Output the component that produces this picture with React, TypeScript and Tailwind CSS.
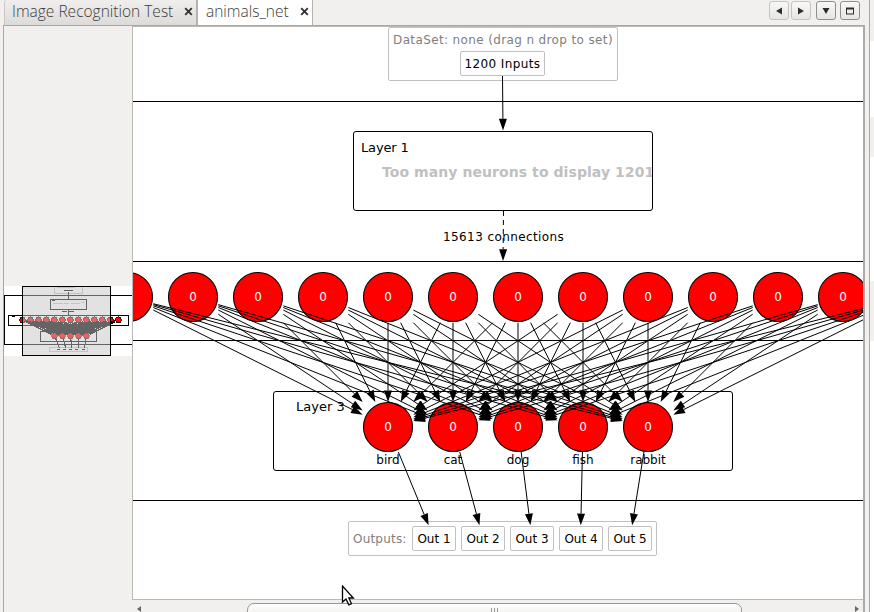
import React from "react";

const LAYER2_X = [128, 193, 258, 323, 388, 453, 518, 583, 648, 713, 778, 843, 908];
const LAYER2_Y = 297;
const LAYER3 = [
  { x: 388, label: "bird", out: 434 },
  { x: 453, label: "cat", out: 483 },
  { x: 518, label: "dog", out: 532 },
  { x: 583, label: "fish", out: 580.5 },
  { x: 648, label: "rabbit", out: 630 },
];
const LAYER3_Y = 427;

type Line = [number, number, number, number];

// Connections run centre to centre and are clipped to each neuron's bounding square.
const connections: Line[] = LAYER2_X.flatMap((sx) =>
  LAYER3.map(({ x }): Line => {
    const dx = x - sx;
    const dy = LAYER3_Y - LAYER2_Y;
    const k = 25.3 / Math.max(Math.abs(dx), dy);
    return [sx + dx * k, LAYER2_Y + 0.4 + dy * k, x - dx * k, LAYER3_Y + 0.4 - dy * k];
  })
);

const outputs: Line[] = LAYER3.map(({ x, out }): Line => {
  const dx = out - x;
  const dy = 538 - LAYER3_Y;
  return [x + (dx * 25) / dy, LAYER3_Y + 25, out - (dx * 13) / dy, 525.3];
});

function Arrow({ line, dashed }: { line: Line; dashed?: boolean }) {
  const [x1, y1, x2, y2] = line;
  const len = Math.hypot(x2 - x1, y2 - y1);
  const ux = (x2 - x1) / len;
  const uy = (y2 - y1) / len;
  const bx = x2 - ux * 11.7;
  const by = y2 - uy * 11.7;
  const w = 4;
  return (
    <g>
      <line x1={x1} y1={y1} x2={bx} y2={by} stroke="black" strokeDasharray={dashed ? "5 4" : undefined} />
      <polygon points={`${x2},${y2} ${bx - uy * w},${by + ux * w} ${bx + uy * w},${by - ux * w}`} />
    </g>
  );
}

function Neuron({ x, y }: { x: number; y: number }) {
  return <circle cx={x} cy={y} r={24.5} fill="#ff0000" stroke="black" strokeWidth={1.1} />;
}

function Label({ x, y, w, className = "", children }: { x: number; y: number; w?: number; className?: string; children: React.ReactNode }) {
  return (
    <span className={`absolute whitespace-nowrap leading-4 ${className}`} style={{ left: x - 133, top: y - 27, width: w }}>
      {children}
    </span>
  );
}

function Canvas() {
  return (
    <div className="relative h-[572px] w-[730px] overflow-hidden bg-white text-[12px] text-black">
      <div className="absolute top-[74px] -left-5 h-[400px] w-[800px] border border-black" />
      <div className="absolute top-[234px] -left-5 h-[80px] w-[800px] border border-black" />
      <div className="absolute top-0 left-[255px] flex h-[54px] w-[230px] flex-col items-center rounded-[2px] border border-[#c0c0c0] pt-[3px]">
        <span className="text-[12px] leading-[18px] tracking-[0.37px] whitespace-nowrap text-[#808080]">DataSet: none (drag n drop to set)</span>
        <span className="mt-[2px] -ml-px flex h-[25px] w-[85px] items-center justify-center rounded-[2px] border border-[#c0c0c0] tracking-[0.38px] whitespace-nowrap">1200 Inputs</span>
      </div>
      <div className="absolute top-[104px] left-[220px] h-[80px] w-[300px] overflow-hidden rounded-[3px] border border-black pt-[8px] pl-[7px]">
        <div className="text-[13px] leading-4 tracking-[-0.15px]">Layer 1</div>
        <div className="mt-[8px] ml-[21px] text-[14px] leading-4 font-bold tracking-[0.07px] whitespace-nowrap text-[#c0c0c0]">Too many neurons to display 1201</div>
      </div>
      <div className="absolute top-[364px] left-[140px] h-[80px] w-[460px] rounded-[3px] border border-black" />
      <div className="absolute top-[494px] left-[215px] flex h-[35px] w-[309px] items-center gap-[5px] rounded-[2px] border border-[#c0c0c0] pl-[4px]">
        <span className="w-[54px] tracking-[0.2px] text-[#808080]">Outputs:</span>
        {[1, 2, 3, 4, 5].map((n) => (
          <span key={n} className="flex h-[25px] w-[44px] items-center justify-center rounded-[2px] border border-[#c0c0c0] whitespace-nowrap">
            Out {n}
          </span>
        ))}
      </div>
      <Label x={296} y={399} className="text-[13px]">Layer 3</Label>
      <svg className="absolute inset-0" width="730" height="572" viewBox="133 27 730 572">
        {LAYER2_X.map((x) => <Neuron key={x} x={x} y={LAYER2_Y} />)}
        {LAYER3.map(({ x }) => <Neuron key={x} x={x} y={LAYER3_Y} />)}
        {connections.map((l, i) => <Arrow key={i} line={l} />)}
        {outputs.map((l, i) => <Arrow key={i} line={l} />)}
        <Arrow line={[502.5, 76, 503, 130.5]} />
        <Arrow line={[503.5, 211, 503, 261]} dashed />
      </svg>
      {LAYER2_X.slice(1, -1).map((x) => <Label key={x} x={x - 10} y={289} w={20} className="text-center text-[12px] text-white">0</Label>)}
      {LAYER3.map(({ x, label }) => (
        <React.Fragment key={x}>
          <Label x={x - 10} y={419} w={20} className="text-center text-white">0</Label>
          <Label x={x - 30} y={452} w={60} className="text-center">{label}</Label>
        </React.Fragment>
      ))}
      <Label x={443} y={229} w={124} className="tracking-[0.4px]">15613 connections</Label>
    </div>
  );
}

function Overview() {
  return (
    <svg width="128" height="70" viewBox="4 286 128 70" shapeRendering="crispEdges">
      <rect x="4" y="286" width="128" height="70" fill="white" />
      <g fill="none" stroke="black">
        <rect x="4.5" y="295.5" width="140" height="49" />
        <rect x="8.5" y="315.5" width="120" height="10" />
        <path d="M12 316.5h3" />
        <g stroke="#c0c0c0">
          <rect x="54.5" y="286.5" width="28" height="7" />
          <path d="M57 287.5h18M53 303.5h10M64 303.5h5M71 303.5h9M81 302.5h4" />
          <rect x="49.5" y="347.5" width="38" height="4" />
        </g>
        <path d="M64 290.5h9M68.5 292v7M68.5 310v6M62 311.5h5M68 311.5h6M52 300.5h3" />
        <rect x="50.5" y="299.5" width="36" height="10" />
        <rect x="40.5" y="331.5" width="56" height="10" />
        <path d="M57 349.5h3M63 349.5h3M69 349.5h3M75 349.5h3M82 349.5h3" />
      </g>
      <g transform="translate(6.75 283.4) scale(.123)">
        {LAYER2_X.map((x) => <circle key={x} cx={x} cy={LAYER2_Y} r="24" fill="red" stroke="black" strokeWidth="7" />)}
        {connections.concat(outputs).map(([x1, y1, x2, y2], i) => (
          <line key={i} x1={x1} y1={y1} x2={x2} y2={y2} stroke="black" strokeWidth="9" />
        ))}
        {LAYER3.map(({ x }) => <circle key={x} cx={x} cy={LAYER3_Y} r="24" fill="red" stroke="black" strokeWidth="5" />)}
      </g>
      <rect x="22.5" y="286.5" width="88" height="69" fill="#c6c6c6" fillOpacity=".505" stroke="black" />
    </svg>
  );
}

function CloseIcon() {
  return (
    <svg width="9" height="9" viewBox="0 0 9 9">
      <path d="M1.2 1.2L7.8 7.8M7.8 1.2L1.2 7.8" stroke="#333" strokeWidth="1.9" />
    </svg>
  );
}

function ToolButton({ faint, children }: { faint?: boolean; children: React.ReactNode }) {
  return (
    <button className={`flex h-[19px] w-5 items-center justify-center rounded-[3px] border bg-gradient-to-b from-[#f8f8f7] to-[#e6e5e3] ${faint ? "border-[#c4c3c1]" : "border-[#908f8d]"}`}>
      <svg width="10" height="8" viewBox="0 0 10 8" fill="#2e2e2e">{children}</svg>
    </button>
  );
}

function TabBar() {
  return (
    <header className="flex h-[25px] font-['Open_Sans',sans-serif] text-[15.5px] font-light text-[#3c3c3c]">
      <div className="ml-1 flex w-[194px] items-center justify-between rounded-tl-[3px] border-r-2 border-l border-r-[#b5b2ae] border-l-[#c9c7c4] bg-gradient-to-b from-[#f0efed] to-[#dddbd9] pr-[3px] pb-[2px] pl-[7px]">
        <span className="whitespace-nowrap">Image Recognition Test</span>
        <CloseIcon />
      </div>
      <div className="flex w-[115px] items-center justify-between border-r border-[#b5b1ab] bg-white pr-[3px] pb-[2px] pl-[8px]">
        <span className="whitespace-nowrap">animals_net</span>
        <CloseIcon />
      </div>
      <div className="ml-auto flex gap-[2px] pt-px pr-[9px]">
        <ToolButton faint><path d="M8 .5V7.5L2 4Z" /></ToolButton>
        <ToolButton faint><path d="M2 .5V7.5L8 4Z" /></ToolButton>
        <div className="ml-[3px] flex gap-1">
          <ToolButton><path d="M1.5 1H8.5L5 7Z" /></ToolButton>
          <ToolButton><path d="M1 .5H9V7.5H1ZM2 2.5V6.5H8V2.5Z" fillRule="evenodd" /></ToolButton>
        </div>
      </div>
    </header>
  );
}

export default function App() {
  return (
    <div className="relative flex h-[612px] w-[874px] overflow-hidden bg-[#f1f0ee] font-['DejaVu_Sans',sans-serif]">
      <div className="flex w-[869px] flex-col">
        <TabBar />
        <main className="ml-[3px] flex h-[587px] w-[862px] border-t border-r-2 border-l border-t-[#aaa6a2] border-r-[#adaba9] border-l-[#aaa6a2]">
          <aside className="flex w-[128px] flex-col pt-[260px]">
            <Overview />
          </aside>
          <section className="flex w-[731px] flex-col">
            <div className="h-[574px] border-t border-b border-l border-[#bdbab5]">
              <Canvas />
            </div>
            <div className="flex items-start justify-between pt-[3px] pr-[4px] pl-[5px]">
              <svg className="mt-[3px]" width="4" height="6"><path d="M4 0V6L0 3Z" fill="#666" /></svg>
              <div className="mr-[7px] flex h-[14px] w-[495px] justify-center gap-[2px] rounded-t-[7px] border border-[#9a9895] bg-gradient-to-b from-white to-[#eeedeb] pt-[4px]">
                <i className="h-1 w-px bg-[#999]" /><i className="h-1 w-px bg-[#999]" /><i className="h-1 w-px bg-[#999]" />
              </div>
              <svg className="mt-[3px]" width="4" height="6"><path d="M0 0V6L4 3Z" fill="#666" /></svg>
            </div>
          </section>
        </main>
      </div>
      <aside className="flex w-[5px] flex-col border-l border-[#aaa6a2] bg-white">
        <div className="h-[41px] bg-[#f1f0ee]" />
        <div className="mt-[76px] h-[40px] bg-[#f1f0ee]" />
        <div className="mt-[124px] h-[60px] bg-[#f1f0ee]" />
      </aside>
      <svg className="absolute top-[585px] left-[341px]" width="16" height="22" viewBox="0 0 16 22">
        <path d="M1.5 1V17L5 14L7.8 19.8L10.4 18.6L7.8 13H12.3Z" fill="white" stroke="black" strokeWidth="1.3" />
      </svg>
    </div>
  );
}
